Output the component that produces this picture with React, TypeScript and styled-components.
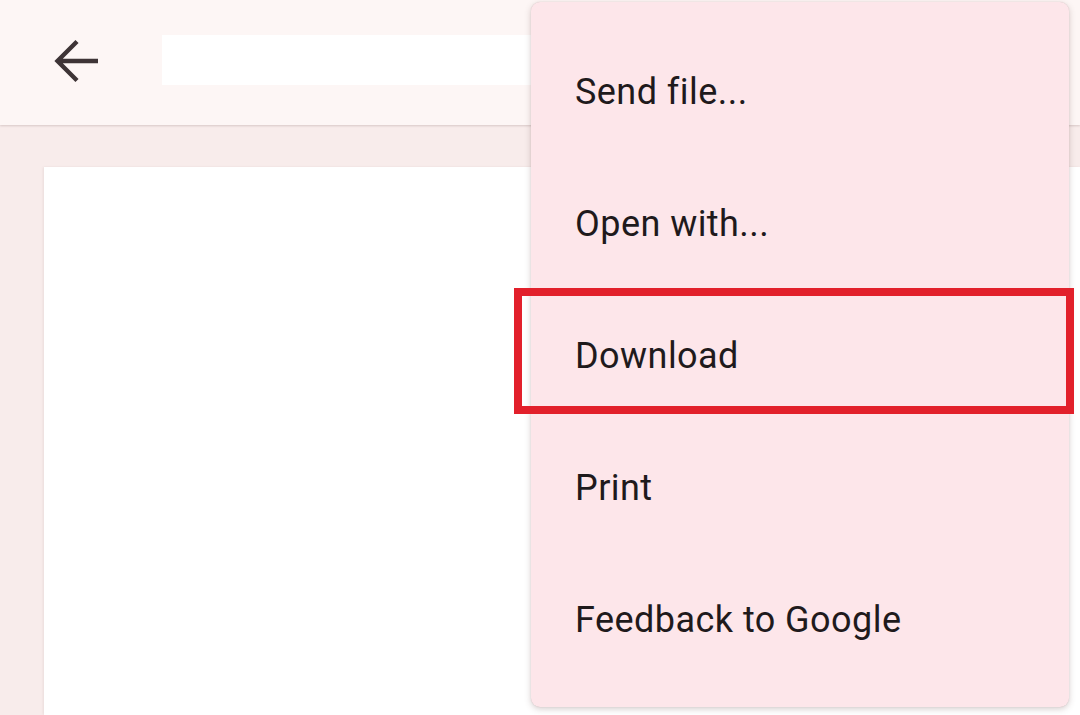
import React from "react";
import styled, { createGlobalStyle } from "styled-components";

const Global = createGlobalStyle`
  html, body { margin: 0; padding: 0; }
  body { font-family: Roboto, "Noto Sans", "Liberation Sans", sans-serif; background: #f8eceb; }
`;

const Screen = styled.div`
  position: relative;
  width: 1080px;
  height: 715px;
  overflow: hidden;
  background: #f8eceb;
  display: flex;
  flex-direction: column;
`;

const Header = styled.header`
  height: 125px;
  flex: none;
  display: flex;
  align-items: center;
  gap: 54px;
  padding: 0 0 0 52px;
  background: #fdf6f5;
  box-shadow: 0 1px 2px rgba(120, 90, 90, 0.25);
  position: relative;
  z-index: 1;
  box-sizing: border-box;
`;

const BackButton = styled.button`
  width: 56px;
  height: 56px;
  margin-top: -4px;
  border: none;
  background: transparent;
  padding: 0;
  display: flex;
  align-items: center;
  justify-content: flex-start;
  cursor: pointer;
`;

const TitleField = styled.div`
  width: 420px;
  height: 50px;
  margin-top: -5px;
  background: #ffffff;
`;

const Content = styled.main`
  flex: 1;
  padding: 42px 0 0 44px;
  display: flex;
`;

const Page = styled.div`
  flex: 1;
  background: #ffffff;
  box-shadow: -1px 0 2px rgba(150, 120, 120, 0.12);
`;

const Menu = styled.ul`
  position: absolute;
  left: 531px;
  top: 2px;
  width: 538px;
  height: 705px;
  margin: 0;
  padding: 24px 0 0 0;
  box-sizing: border-box;
  list-style: none;
  background: #fde6ea;
  border-radius: 9px;
  box-shadow: 0 2px 6px rgba(90, 60, 60, 0.25), 0 0 1px rgba(90, 60, 60, 0.25);
  z-index: 2;
`;

const Item = styled.li<{ $highlight?: boolean }>`
  position: relative;
  height: 132px;
  display: flex;
  align-items: center;
  padding-left: 44px;
  font-size: 36px;
  color: #1f1a1c;
  letter-spacing: 0.45px;
  ${(p) =>
    p.$highlight &&
    `
    &::after {
      content: "";
      position: absolute;
      left: -17px;
      right: -5px;
      top: -2px;
      bottom: 8px;
      border: 8px solid #e2202b;
      box-sizing: border-box;
      pointer-events: none;
    }
  `}
`;

const BackArrow = () => (
  <svg width="48" height="48" viewBox="0 0 48 48" fill="none">
    <path
      d="M46 24H7M25 4.5L5.5 24l19.5 19.5"
      stroke="#3e3436"
      strokeWidth="4.4"
      strokeLinecap="butt"
    />
  </svg>
);

const items = ["Send file...", "Open with...", "Download", "Print", "Feedback to Google"];

export default function App() {
  return (
    <>
      <Global />
      <Screen>
        <Header>
          <BackButton aria-label="Back">
            <BackArrow />
          </BackButton>
          <TitleField />
        </Header>
        <Content>
          <Page />
        </Content>
        <Menu>
          {items.map((t) => (
            <Item key={t} $highlight={t === "Download"}>
              {t}
            </Item>
          ))}
        </Menu>
      </Screen>
    </>
  );
}
